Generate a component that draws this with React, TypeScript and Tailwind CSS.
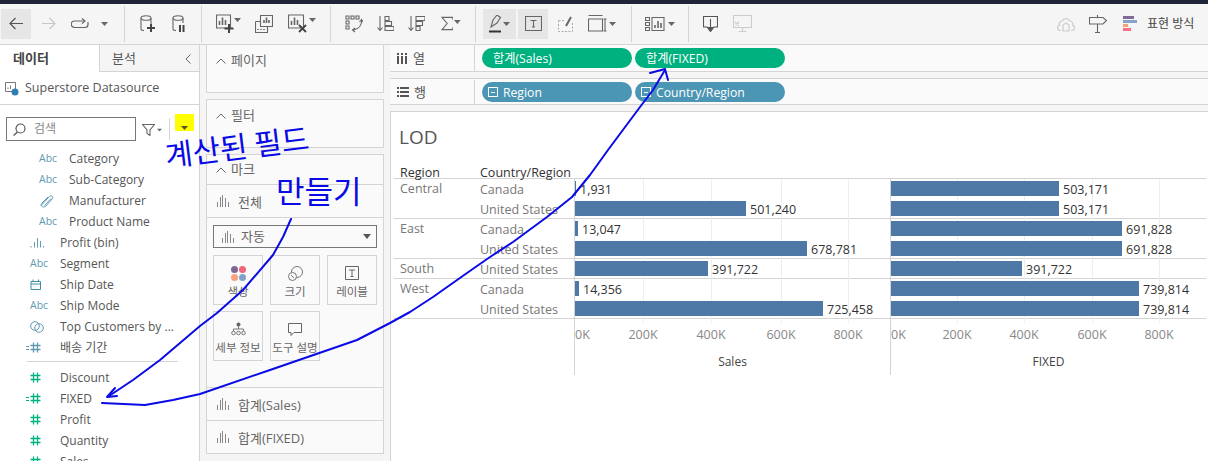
import React from "react";

const sans = "font-['Open_Sans','Noto_Sans_CJK_KR',sans-serif]";

interface Field {
  name: string;
  kind: "abc" | "clip" | "bin" | "date" | "set" | "calc" | "num" | "numcalc";
  nested?: boolean;
}

const dimensionFields: Field[] = [
  { name: "Category", kind: "abc", nested: true },
  { name: "Sub-Category", kind: "abc", nested: true },
  { name: "Manufacturer", kind: "clip", nested: true },
  { name: "Product Name", kind: "abc", nested: true },
  { name: "Profit (bin)", kind: "bin" },
  { name: "Segment", kind: "abc" },
  { name: "Ship Date", kind: "date" },
  { name: "Ship Mode", kind: "abc" },
  { name: "Top Customers by ...", kind: "set" },
  { name: "배송 기간", kind: "calc" },
];

const measureFields: Field[] = [
  { name: "Discount", kind: "num" },
  { name: "FIXED", kind: "numcalc" },
  { name: "Profit", kind: "num" },
  { name: "Quantity", kind: "num" },
  { name: "Sales", kind: "num" },
];

const groups = [
  {
    region: "Central",
    rows: [
      { country: "Canada", sales: 1, salesLabel: "1,931", fixed: 168, fixedLabel: "503,171" },
      { country: "United States", sales: 171, salesLabel: "501,240", fixed: 168, fixedLabel: "503,171" },
    ],
  },
  {
    region: "East",
    rows: [
      { country: "Canada", sales: 3, salesLabel: "13,047", fixed: 231, fixedLabel: "691,828" },
      { country: "United States", sales: 232, salesLabel: "678,781", fixed: 231, fixedLabel: "691,828" },
    ],
  },
  {
    region: "South",
    rows: [{ country: "United States", sales: 133, salesLabel: "391,722", fixed: 131, fixedLabel: "391,722" }],
  },
  {
    region: "West",
    rows: [
      { country: "Canada", sales: 4, salesLabel: "14,356", fixed: 248, fixedLabel: "739,814" },
      { country: "United States", sales: 248, salesLabel: "725,458", fixed: 248, fixedLabel: "739,814" },
    ],
  },
];

const salesTicks = [68, 136, 206, 273];
const fixedTicks = [66, 133, 201, 268];
const tickNames = ["200K", "400K", "600K", "800K"];

const Caret = ({ className = "" }: { className?: string }) => (
  <svg width="7" height="4" viewBox="0 0 7 4" className={className}>
    <path d="M0 0h7L3.5 4z" fill="#666" />
  </svg>
);

const Sep = ({ className = "" }: { className?: string }) => (
  <div className={`w-px h-[36px] bg-[#d4d4d4] shrink-0 ${className}`} />
);

const BarsIcon = ({ className = "" }: { className?: string }) => (
  <svg width="12" height="14" viewBox="0 0 12 14" className={className} stroke="#888" strokeWidth="1">
    <path d="M.5 13V8M3.500 13V3M5.500 13V1M8.500 13V4M11.500 13V8" />
  </svg>
);

const Hash = ({ color }: { color: string }) => (
  <svg width="11" height="11" viewBox="0 0 11 11" stroke={color} strokeWidth="1.3">
    <path d="M3.5 0.5v10M7.5 0.5v10M0.5 3.5h10M0.5 7.5h10" />
  </svg>
);

const FieldIcon = ({ kind }: { kind: Field["kind"] }) => {
  if (kind === "abc") return <span className="text-[10.5px] leading-none text-[#5f9ab0]">Abc</span>;
  if (kind === "clip")
    return (
      <svg width="16" height="14" viewBox="0 0 16 14" fill="none" stroke="#5f9ab0" strokeWidth="1">
        <path d="M2 11.5 10.5 2.5c1.5-1.5 4-.2 3 2L7 12c-1.5 1.5-3.8 1-4.5 0-.7-1-.2-2 .5-3L9 3M5.5 11.5 12 4.5" />
      </svg>
    );
  if (kind === "bin")
    return (
      <svg width="14" height="11" viewBox="0 0 14 11" stroke="#5f9ab0" strokeWidth="1">
        <path d="M1 10.5V9M4.5 10.5V5M7.5 10.5V1M10.5 10.5V4M13.5 10.5V9" />
      </svg>
    );
  if (kind === "date")
    return (
      <svg width="11" height="11" viewBox="0 0 11 11" fill="none" stroke="#3f8ea6" strokeWidth="1">
        <path d="M1 2.5h9.5v8H1zM1 5h9.5M3 .5v2.500M8.500 .5v2.500" />
      </svg>
    );
  if (kind === "set")
    return (
      <svg width="14" height="14" viewBox="0 0 14 14" fill="none" stroke="#5f9ab0" strokeWidth="1">
        <circle cx="5" cy="6" r="4.3" />
        <circle cx="9" cy="8" r="4.3" />
      </svg>
    );
  const color = kind === "calc" ? "#5f9ab0" : "#00b180";
  if (kind === "num") return <Hash color={color} />;
  return (
    <span className="flex items-center gap-[1px] -ml-[4px]">
      <svg width="3" height="4" viewBox="0 0 3 4" stroke={color} strokeWidth="1">
        <path d="M0 .5h3M0 3.5h3" />
      </svg>
      <Hash color={color} />
    </span>
  );
};

const FieldRow = ({ field }: { field: Field }) => (
  <div className={`h-[21px] flex items-center text-[12px] text-[#555] ${field.nested ? "pl-[39px]" : "pl-[30px]"}`}>
    <span className="w-[30px] flex items-center shrink-0">
      <FieldIcon kind={field.kind} />
    </span>
    <span className="whitespace-nowrap">{field.name}</span>
  </div>
);

const Toolbar = () => (
  <div className="h-[41px] shrink-0 flex items-center bg-[#f5f5f5] border-b border-[#d4d4d4] pb-px">
    <div className="ml-px w-[30px] h-[30px] bg-[#e6e6e6] flex items-center justify-center">
      <svg width="14" height="13" viewBox="0 0 14 13" fill="none" stroke="#555" strokeWidth="1.2">
        <path d="M14 6.5H1M6.5 1 1 6.5 6.5 12" />
      </svg>
    </div>
    <svg width="14" height="13" viewBox="0 0 14 13" fill="none" stroke="#c8c8c8" strokeWidth="1.2" className="ml-[11px]">
      <path d="M0 6.5h13M7.5 1 13 6.5 7.5 12" />
    </svg>
    <svg width="18" height="12" viewBox="0 0 18 12" fill="none" stroke="#666" strokeWidth="1.2" className="ml-[15px]">
      <path d="M13 3H3.5a2.8 2.8 0 0 0 0 6.5H14a3 3 0 0 0 3-3V4" />
      <path d="M11 .5 14 3l-3 2.5" />
    </svg>
    <Caret className="ml-[12px]" />
    <Sep className="ml-[16px]" />
    <svg width="15" height="18" viewBox="0 0 15 18" fill="none" stroke="#666" strokeWidth="1.1" className="ml-[15px]">
      <ellipse cx="6" cy="3" rx="5" ry="2.3" />
      <path d="M1 3v11c0 1 1 1.5 3 1.5M11 3v6" />
      <path d="M11 9v8M7 13h8" stroke="#444" strokeWidth="2" />
    </svg>
    <svg width="13" height="18" viewBox="0 0 13 18" fill="none" stroke="#666" strokeWidth="1.1" className="ml-[17px]">
      <ellipse cx="6" cy="3" rx="5" ry="2.3" />
      <path d="M1 3v11c0 1 1 1.5 3 1.5M11 3v5" />
      <path d="M8 10v7M11.5 10v7" stroke="#444" strokeWidth="2" />
    </svg>
    <Sep className="ml-[16px]" />
    <div className="ml-[14px] w-[25px] flex items-start">
      <svg width="18" height="19" viewBox="0 0 18 19" fill="none" stroke="#666" strokeWidth="1.1">
        <path d="M.5 1h14v13H.5z" />
        <path d="M3.5 11V7M6.5 11V3.5M9.5 11V6" strokeWidth="1.6" />
        <path d="M13 10v9M8.5 14.5h9" stroke="#444" strokeWidth="2" />
      </svg>
      <Caret className="mt-[4px]" />
    </div>
    <svg width="18" height="18" viewBox="0 0 18 18" fill="none" stroke="#666" strokeWidth="1.1" className="ml-[14px]">
      <path d="M5.5.5h12v11h-12zM.5 6.5h5M.5 6.5v11h12v-6" />
      <path d="M9 8V5M11.5 8V2.5M14 8V5M3 15v-1M6 15v-1M9 15v-1" strokeWidth="1.6" />
    </svg>
    <div className="ml-[15px] w-[28px] flex items-start">
      <svg width="21" height="19" viewBox="0 0 21 19" fill="none" stroke="#666" strokeWidth="1.1">
        <path d="M.5 1h15v13H.5z" />
        <path d="M3.5 11V7M6.5 11V3.5M9.5 11V6" strokeWidth="1.6" />
        <path d="M11 11l7 7M18 11l-7 7" stroke="#444" strokeWidth="1.8" />
      </svg>
      <Caret className="mt-[4px]" />
    </div>
    <Sep className="ml-[14px]" />
    <svg width="18" height="18" viewBox="0 0 18 18" fill="none" stroke="#666" strokeWidth="1.1" className="ml-[14px]">
      <path d="M1 1h3v3H1zM6 1h3v3H6zM11 1h3v3h-3zM1 6h3v3H1zM1 11h3v3H1z" />
      <path d="M16.5 5c.5 5-2.500 9-8 10M14.500 7l2-2.500 1.500 2.500M10 13l-2.500 2 2.500 2" />
    </svg>
    <svg width="17" height="17" viewBox="0 0 17 17" fill="none" stroke="#666" strokeWidth="1.1" className="ml-[14px]">
      <path d="M3 1v14M.5 12.500 3 15.500l2.500-3" />
      <path d="M8 1.500h4v4H8zM8 6.500h6.500v4H8zM8 11.500h9v4H8z" />
    </svg>
    <svg width="17" height="17" viewBox="0 0 17 17" fill="none" stroke="#666" strokeWidth="1.1" className="ml-[14px]">
      <path d="M3 1v14M.5 12.500 3 15.500l2.500-3" />
      <path d="M8 1.500h9v4H8zM8 6.500h6.500v4H8zM8 11.500h4v4H8z" />
    </svg>
    <div className="ml-[16px] w-[20px] flex items-start">
      <svg width="13" height="15" viewBox="0 0 13 15" fill="none" stroke="#666" strokeWidth="1.2">
        <path d="M12.500 3.500V1H1l5.500 6.500L1 14h11.500v-2.500" />
      </svg>
      <Caret className="ml-[1px] mt-[4px]" />
    </div>
    <Sep className="ml-[14px]" />
    <div className="ml-[7px] w-[33px] h-[30px] bg-[#e6e6e6] flex items-center justify-center gap-[1px]">
      <span className="relative w-[13px] h-[18px] block">
        <svg width="13" height="18" viewBox="0 0 13 18" fill="none" stroke="#666" strokeWidth="1.1">
          <path d="M2 12 4 5l4-5 3.500 2.500L8 8zM0 16.500h12" />
          <path d="M0 16.500h12" stroke="#333" strokeWidth="2" />
        </svg>
      </span>
      <Caret />
    </div>
    <div className="ml-[2px] w-[30px] h-[30px] bg-[#e6e6e6] flex items-center justify-center">
      <svg width="17" height="15" viewBox="0 0 17 15" fill="none" stroke="#666" strokeWidth="1.1">
        <path d="M.5.500h16v14H.5zM5.500 4.500h6M8.500 4.500V11M7 11h3" />
      </svg>
    </div>
    <svg width="15" height="16" viewBox="0 0 15 16" fill="none" stroke="#aaa" strokeWidth="1" className="ml-[10px]">
      <path d="M.5 4.500h7M.5 4.500v11h14v-9" strokeDasharray="2 1.500" />
      <path d="M8 10l5-9" stroke="#666" strokeWidth="2" />
    </svg>
    <div className="ml-[15px] w-[28px] flex items-center">
      <svg width="19" height="17" viewBox="0 0 19 17" fill="none" stroke="#666" strokeWidth="1.1">
        <path d="M.5.500h14M.5 4h14v12H.5zM17 4v12M15.500 4h3M15.500 16h3" />
      </svg>
      <Caret className="ml-[2px]" />
    </div>
    <Sep className="ml-[15px]" />
    <div className="ml-[13px] w-[30px] flex items-center">
      <svg width="20" height="14" viewBox="0 0 20 14" fill="none" stroke="#666" strokeWidth="1.1">
        <path d="M.5.500h4v3h-4zM.5 5.500h4v3h-4zM.5 10.500h4v3h-4zM7 .5h12v13H7z" />
        <path d="M10 11V8M13 11V4M16 11V6" strokeWidth="1.6" />
      </svg>
      <Caret className="ml-[3px]" />
    </div>
    <Sep className="ml-[13px]" />
    <svg width="15" height="16" viewBox="0 0 15 16" fill="none" stroke="#555" strokeWidth="1.1" className="ml-[14px]">
      <path d="M4.500 11H.5V.5h14V11h-4" />
      <path d="M7.500 3v9" />
      <path d="M4.500 11.500h6L7.500 15.500z" fill="#555" />
    </svg>
    <svg width="19" height="17" viewBox="0 0 19 17" fill="none" stroke="#ccc" strokeWidth="1.1" className="ml-[15px]">
      <path d="M.5.500h18v12H.5zM9.500 12.500v4M5.500 16.500h8M2 7l4 4M2.500 10.500 6 7" />
    </svg>
    <svg width="18" height="16" viewBox="0 0 18 16" fill="none" stroke="#ccc" strokeWidth="1.2" className="ml-auto">
      <path d="M4 14.500H3a2.700 2.700 0 0 1-.5-5.300A3 3 0 0 1 5 5a4.500 4.500 0 0 1 8 0 3 3 0 0 1 2.500 4.200 2.700 2.700 0 0 1-.5 5.300h-1" />
      <path d="M6 15V9l3-2 3 2v6z" />
    </svg>
    <svg width="18" height="18" viewBox="0 0 18 18" fill="none" stroke="#666" strokeWidth="1.1" className="ml-[14px]">
      <path d="M.5 2.500h13.500l3.500 3-3.500 3.500H.500zM8.500 0v2.500M8.500 9v9M6 17.500h5" />
    </svg>
    <div className="ml-[16px] w-[14px] flex flex-col gap-px">
      <div className="h-[3px] w-[11px] bg-[#7f6c96]" />
      <div className="h-[3px] w-[14px] bg-[#86a3c9]" />
      <div className="h-[3px] w-[5px] bg-[#f1a27b]" />
      <div className="h-[3px] w-[8px] bg-[#f4717f]" />
    </div>
    <span className={`ml-[10px] mr-[15px] w-[46px] text-[12px] text-[#444] whitespace-nowrap ${sans}`}>표현 방식</span>
  </div>
);

const DataPanel = () => (
  <div className="w-[200px] shrink-0 bg-white border-r border-[#d4d4d4] flex flex-col overflow-hidden">
    <div className="h-[27px] flex shrink-0 text-[13px]">
      <div className="w-[100px] border-r border-[#d4d4d4] flex items-center pl-[13px] font-bold text-[#444]">데이터</div>
      <div className="flex-1 bg-[#f5f5f5] border-b border-[#d4d4d4] flex items-center pl-[12px] pt-px text-[#555]">
        분석
        <svg width="6" height="10" viewBox="0 0 6 10" fill="none" stroke="#666" className="ml-auto mr-[8px]">
          <path d="M5.500.5 1 5l4.500 4.500" />
        </svg>
      </div>
    </div>
    <div className="h-[33px] shrink-0 border-b border-[#d4d4d4] flex items-center pl-[5px] text-[12.5px] text-[#555]">
      <svg width="14" height="15" viewBox="0 0 14 15" className="mr-[6px] shrink-0">
        <path d="M.5 1.500h10v9H.5z" fill="none" stroke="#777" />
        <path d="M3 8V6.500M5.500 8V4.500" stroke="#777" />
        <circle cx="10" cy="11" r="3.500" fill="#2f7fb5" />
      </svg>
      Superstore Datasource
    </div>
    <div className="h-[43px] shrink-0 flex items-start pt-[12px] pl-[6px]">
      <div className="w-[130px] h-[24px] border border-[#777] flex items-center pl-[6px] text-[12px] text-[#888]">
        <svg width="13" height="13" viewBox="0 0 13 13" fill="none" stroke="#555" strokeWidth="1.200" className="mr-[8px] shrink-0">
          <circle cx="7.500" cy="5.500" r="4.500" />
          <path d="M4.500 9 .5 12.500" />
        </svg>
        검색
      </div>
      <svg width="13" height="12" viewBox="0 0 13 12" fill="none" stroke="#666" strokeWidth="1.100" className="ml-[6px] mt-[7px]">
        <path d="M.5.500h12L8 6v5.500L5 9.500V6z" />
      </svg>
      <Caret className="ml-[1px] mt-[11px] scale-75" />
      <div className="w-px h-[22px] bg-[#d4d4d4] ml-[6px] mt-[1px]" />
      <div className="w-[19px] h-[17px] bg-[#ffff00] ml-[5px] -mt-[3px] flex items-end justify-center pb-px">
        <svg width="7" height="4" viewBox="0 0 7 4">
          <path d="M0 0h7L3.500 4z" fill="#5a5320" />
        </svg>
      </div>
    </div>
    <div>
      {dimensionFields.map((f) => (
        <FieldRow key={f.name} field={f} />
      ))}
      <div className="h-[9px] flex items-center">
        <div className="ml-[27px] w-[151px] h-px bg-[#d4d4d4] -mt-[3px]" />
      </div>
      {measureFields.map((f) => (
        <FieldRow key={f.name} field={f} />
      ))}
    </div>
  </div>
);

const Chevron = () => (
  <svg width="10" height="6" viewBox="0 0 10 6" fill="none" stroke="#666" className="mr-[5px]">
    <path d="M.5 5.500 5 1l4.500 4.500" />
  </svg>
);

const MarkTile = ({ label, icon }: { label: string; icon: React.ReactNode }) => (
  <div className="h-[50px] border border-[#d4d4d4] flex flex-col items-center pt-[9px] text-[11.5px] text-[#666]">
    <div className="h-[16px] flex items-center justify-center">{icon}</div>
    <div className="mt-[3px] leading-[16px] whitespace-nowrap">{label}</div>
  </div>
);

const MarksRow = ({ label }: { label: string }) => (
  <div className="h-[33px] border-t border-[#d4d4d4] flex items-center pl-[10px] text-[13px] text-[#666]">
    <BarsIcon className="mr-[9px]" />
    <span className="pt-[4px]">{label}</span>
  </div>
);

const MarksPanel = () => (
  <div className="w-[190px] shrink-0 bg-[#f5f5f5] px-[6px] flex flex-col">
    <div className="h-[48px] border-x border-b border-[#d4d4d4] bg-[#fafafa] flex items-start pt-[6px] pl-[9px] text-[13px] text-[#666]">
      <span className="flex items-center">
        <Chevron />
        페이지
      </span>
    </div>
    <div className="h-[49px] mt-[6px] border border-[#d4d4d4] bg-[#fafafa] flex items-start pt-[6px] pl-[9px] text-[13px] text-[#666]">
      <span className="flex items-center">
        <Chevron />
        필터
      </span>
    </div>
    <div className="mt-[6px] border border-[#d4d4d4] bg-[#fafafa]">
      <div className="h-[29px] flex items-center pl-[9px] text-[13px] text-[#666]">
        <Chevron />
        마크
      </div>
      <MarksRow label="전체" />
      <div className="h-[170px] border-t border-[#d4d4d4] px-[6px] pt-[7px]">
        <div className="h-[23px] border border-[#777] flex items-center pl-[8px] pr-[5px] text-[13px] text-[#666]">
          <BarsIcon className="mr-[7px]" />
          <span className="pt-px">자동</span>
          <svg width="8" height="5" viewBox="0 0 8 5" className="ml-auto">
            <path d="M0 0h8L4 5z" fill="#555" />
          </svg>
        </div>
        <div className="grid grid-cols-[50px_50px_50px] gap-x-[7px] gap-y-[6px] mt-[7px] w-[164px]">
          <MarkTile
            label="색상"
            icon={
              <div className="grid grid-cols-[7px_7px] gap-[1px]">
                <div className="w-[7px] h-[7px] rounded-full bg-[#7b6a94]" />
                <div className="w-[7px] h-[7px] rounded-full bg-[#f0667b]" />
                <div className="w-[7px] h-[7px] rounded-full bg-[#f4a37c]" />
                <div className="w-[7px] h-[7px] rounded-full bg-[#7fa2c9]" />
              </div>
            }
          />
          <MarkTile
            label="크기"
            icon={
              <svg width="15" height="15" viewBox="0 0 15 15" fill="none" stroke="#777">
                <circle cx="9" cy="6" r="5.500" />
                <circle cx="4.500" cy="10.500" r="4" fill="#fafafa" />
                <path d="M3 9l3 3" />
              </svg>
            }
          />
          <MarkTile
            label="레이블"
            icon={
              <svg width="14" height="14" viewBox="0 0 14 14" fill="none" stroke="#666">
                <path d="M.5.500h13v13H.5zM4 4h6M7 4v6.500M5.500 10.500h3" />
              </svg>
            }
          />
          <MarkTile
            label="세부 정보"
            icon={
              <svg width="15" height="14" viewBox="0 0 15 14" fill="none" stroke="#777">
                <circle cx="7.500" cy="2.500" r="2" fill="#666" stroke="none" />
                <path d="M7.500 4v3M2.500 9V7h10v2" />
                <circle cx="2.500" cy="11" r="1.800" />
                <circle cx="7.500" cy="11" r="1.800" />
                <circle cx="12.500" cy="11" r="1.800" />
              </svg>
            }
          />
          <MarkTile
            label="도구 설명"
            icon={
              <svg width="14" height="13" viewBox="0 0 14 13" fill="none" stroke="#666">
                <path d="M.5.500h13v9H6L3 12.500v-3H.5z" />
              </svg>
            }
          />
        </div>
      </div>
      <MarksRow label="합계(Sales)" />
      <MarksRow label="합계(FIXED)" />
    </div>
  </div>
);

const Pill = ({ label, green, icon }: { label: string; green?: boolean; icon?: boolean }) => (
  <div
    className={`w-[150px] h-[20px] rounded-full flex items-center text-[12.2px] text-white ${
      green ? "bg-[#00b180] pl-[11px]" : "bg-[#4b96b4] pl-[6px]"
    }`}
  >
    {icon && (
      <span className="w-[10px] h-[10px] border border-white mr-[5px] flex items-center justify-center">
        <span className="w-[4px] h-px bg-white" />
      </span>
    )}
    <span className="pt-[2px]">{label}</span>
  </div>
);

const Shelf = ({ label, icon, children, className = "" }: { label: string; icon: React.ReactNode; children: React.ReactNode; className?: string }) => (
  <div className={`h-[27px] shrink-0 flex bg-[#fafafa] border-b border-[#d4d4d4] ${className}`}>
    <div className="w-[85px] shrink-0 border-r border-[#d4d4d4] flex items-center pl-[7px] text-[13px] text-[#555] gap-[5px]">
      {icon}
      <span className="pt-px">{label}</span>
    </div>
    <div className="flex items-center pl-[7px] gap-[3px]">{children}</div>
  </div>
);

const Pane = ({ width, label, ticks }: { width: number; label: string; ticks: number[] }) => (
  <div className="relative h-[20px] border-l border-[#d4d4d4]">
    {ticks.map((t) => (
      <div key={t} className="absolute top-0 bottom-0 w-px bg-[#eeeeee]" style={{ left: t }} />
    ))}
    <div className="relative flex items-center h-[19px]">
      <div className="h-[15px] bg-[#4e79a7]" style={{ width }} />
      <span className="ml-[4px] pt-[2px] text-[12.5px] text-[#333]">{label}</span>
    </div>
  </div>
);

const Axis = ({ ticks, title }: { ticks: number[]; title: string }) => (
  <div className="relative h-[56px] border-l border-[#d4d4d4] text-[12.5px] text-[#888]">
    {ticks.map((t) => (
      <div key={t} className="absolute top-0 h-[4px] w-px bg-[#eeeeee]" style={{ left: t }} />
    ))}
    <span className="absolute left-0 top-[7px]">0K</span>
    {ticks.map((t, i) => (
      <span key={t} className="absolute top-[7px] -translate-x-1/2" style={{ left: t }}>
        {tickNames[i]}
      </span>
    ))}
    <div className="absolute inset-x-0 top-[34px] text-center text-[12px] text-[#444]">{title}</div>
  </div>
);

const Viz = () => (
  <div className="flex-1 bg-white border-l border-t border-[#d4d4d4] mt-[6px]">
    <div className="h-[49px] flex items-center pl-[8px] pt-[1px] text-[19px] text-[#555]">LOD</div>
    <div className="ml-[3px] w-[812px] text-[12.5px]">
      <div className="grid grid-cols-[86px_94px_632px] h-[17px] items-center text-[#333] border-b border-[#d4d4d4] box-content">
        <span className="pl-[6px] pt-[3px]">Region</span>
        <span className="pt-[3px]">Country/Region</span>
      </div>
      {groups.map((g) => (
        <div key={g.region} className="border-b border-[#d4d4d4] grid grid-cols-[86px_726px]" style={{ height: g.rows.length * 20 }}>
          <div className="pl-[6px] text-[#777] leading-[19px]">{g.region}</div>
          <div>
            {g.rows.map((r) => (
              <div key={r.country} className="grid grid-cols-[94px_316px_316px] h-[20px] items-center">
                <span className="pt-[2px] text-[#777]">{r.country}</span>
                <Pane width={r.sales} label={r.salesLabel} ticks={salesTicks} />
                <Pane width={r.fixed} label={r.fixedLabel} ticks={fixedTicks} />
              </div>
            ))}
          </div>
        </div>
      ))}
      <div className="grid grid-cols-[180px_316px_316px]">
        <div />
        <Axis ticks={salesTicks} title="Sales" />
        <Axis ticks={fixedTicks} title="FIXED" />
      </div>
    </div>
  </div>
);

const Annotations = () => (
  <>
    <svg width="1208" height="461" viewBox="0 0 1208 461" fill="none" stroke="#0a0ae6" strokeWidth="2" strokeLinecap="round" strokeLinejoin="round" className="absolute inset-0 pointer-events-none">
      <path d="M291 219 283 237 273 255 243 290 217 313 200 326 160 360 133 380 109 396" />
      <path d="M107 397 117 396M107 397 115 388" />
      <path d="M102 403 145 405 173 400 200 394 270 370 357 340 390 323 410 312 433 297 467 273 490 257 513 242 547 217 572 197 590 175 608 150 640 107 653 90 665 70" />
      <path d="M650 73 665 69 668 80" />
    </svg>
    <span className="absolute left-[165px] top-[134px] text-[30px] leading-[40px] text-[#0a0ae6] whitespace-nowrap -rotate-[7deg] origin-left font-['Noto_Sans_CJK_KR',sans-serif]">
      계산된 필드
    </span>
    <span className="absolute left-[276px] top-[170px] text-[31px] leading-[40px] text-[#0a0ae6] whitespace-nowrap font-['Noto_Sans_CJK_KR',sans-serif]">
      만들기
    </span>
  </>
);

export default function App() {
  return (
    <div className={`relative w-[1208px] h-[461px] overflow-hidden flex flex-col bg-[#f5f5f5] ${sans}`}>
      <div className="h-[4px] shrink-0 bg-[#1f2438]" />
      <Toolbar />
      <div className="flex flex-1 min-h-0">
        <DataPanel />
        <MarksPanel />
        <div className="flex-1 flex flex-col">
          <Shelf
            label="열"
            icon={
              <svg width="11" height="11" viewBox="0 0 11 11" fill="#555">
                <path d="M0 0h2v2H0zM0 3h2v8H0zM4 0h2v2H4zM4 3h2v8H4zM8 0h2v2H8zM8 3h2v8H8z" />
              </svg>
            }
          >
            <Pill label="합계(Sales)" green />
            <Pill label="합계(FIXED)" green />
          </Shelf>
          <Shelf
            label="행"
            className="mt-[6px] border-t pt-px"
            icon={
              <svg width="12" height="10" viewBox="0 0 12 10" fill="#555">
                <path d="M0 0h2v2H0zM3 0h9v2H3zM0 4h2v2H0zM3 4h9v2H3zM0 8h2v2H0zM3 8h9v2H3z" />
              </svg>
            }
          >
            <Pill label="Region" icon />
            <Pill label="Country/Region" icon />
          </Shelf>
          <Viz />
        </div>
      </div>
      <Annotations />
    </div>
  );
}
